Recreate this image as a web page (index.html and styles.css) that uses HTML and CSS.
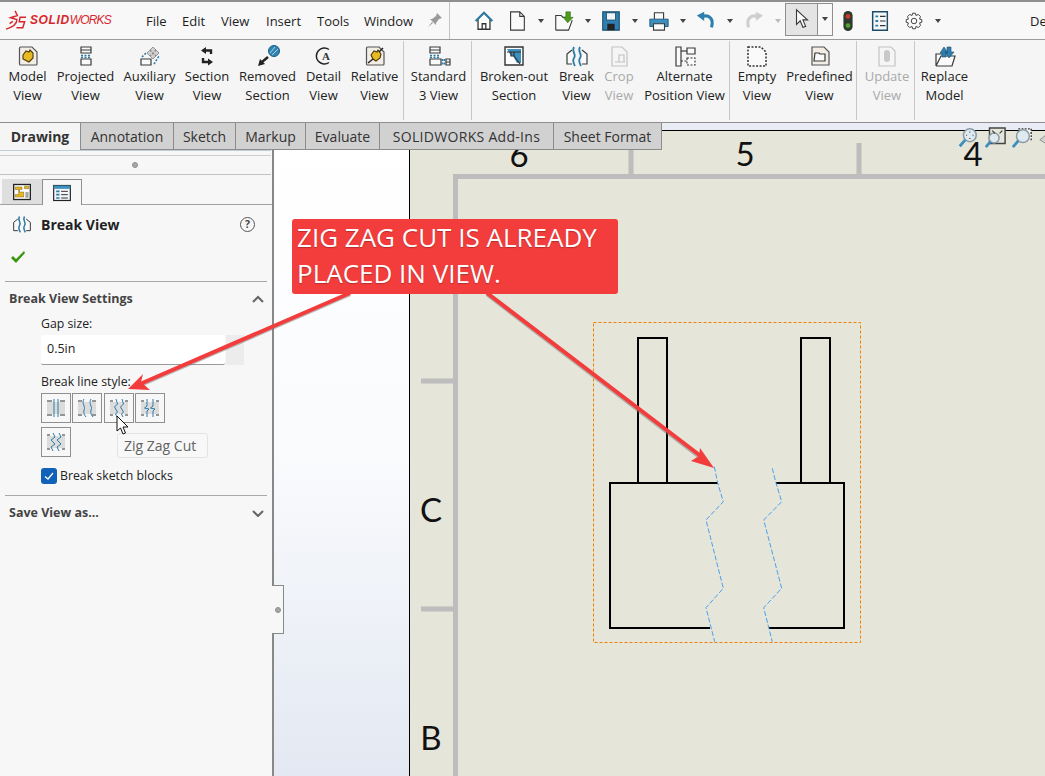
FILE: index.html
```html
<!DOCTYPE html>
<html lang="en">
<head>
<meta charset="utf-8">
<title>SOLIDWORKS Break View</title>
<link rel="stylesheet" href="styles.css">
</head>
<body>
<div class="app">
  <header class="topbar">
    <div class="logo">
      <svg class="logo-mark" viewBox="0 0 24 22"><path d="M11 1 L13.5 6 L6 8.5 L13 10.5 C13 15 8 19 1 21 M5 15 L8.5 12.5 M23 8 H16.5 L15.5 13 H21.5 L19.5 19.5 H12.5"/></svg>
      <span class="logo-text"><b>SOLID</b>WORKS</span>
    </div>
    <nav class="menu"><span>File</span><span>Edit</span><span>View</span><span>Insert</span><span>Tools</span><span>Window</span></nav>
    <svg class="pin" viewBox="0 0 16 16"><path d="M10 1 L15 6 L12 7 L9 11 L9 13 L3 7 L5 7 L9 4 Z M5 10 L1 15 L6 11 Z"/></svg>
    <div class="qa">
      <svg class="qi qi-home" viewBox="0 0 24 24"><path class="ol" d="M3 12 L12 3 L21 12 M5.5 10 V21 H18.5 V10 M10 21 V15 H14 V21"/><path class="blue" d="M3 12 L12 3 L21 12"/></svg>
      <svg class="qi qi-new" viewBox="0 0 24 24"><path class="page" d="M5 2 H15 L20 7 V22 H5 Z M15 2 V7 H20"/></svg>
      <i class="drop"></i>
      <svg class="qi qi-open" viewBox="0 0 24 24"><path class="page" d="M3 22 V6 H9 L11 8 H15 M3 22 H17 L21 11"/><path class="greenfill" d="M14 2 H19 V8 H22 L16 14 L11 8 H14 Z"/></svg>
      <i class="drop"></i>
      <svg class="qi qi-save" viewBox="0 0 24 24"><path class="savebody" d="M3 2 H21 V22 H3 Z"/><path class="savelabel" d="M7 3 H17 V11 H7 Z"/><path class="savedisk" d="M8 15 H16 V22 H8 Z"/></svg>
      <i class="drop"></i>
      <svg class="qi qi-print" viewBox="0 0 24 24"><path class="page" d="M7 10 V3 H17 V10"/><path class="printbody" d="M2 10 H22 V18 H2 Z"/><path class="page" d="M6 15 H18 V22 H6 Z"/></svg>
      <i class="drop"></i>
      <svg class="qi qi-undo" viewBox="0 0 24 24"><path class="undo" d="M8 7 C15 5 21 9 18 19"/><path class="undohead" d="M2 6 L10 2 L10 12 Z"/></svg>
      <i class="drop"></i>
      <svg class="qi qi-redo" viewBox="0 0 24 24"><path class="redo" d="M16 7 C9 5 3 9 6 19"/><path class="redohead" d="M22 6 L14 2 L14 12 Z"/></svg>
      <i class="drop dim"></i>
      <div class="selectbtn">
        <span class="selectmain"><svg class="qi" viewBox="0 0 24 24"><path class="page" d="M6 2 L6 18 L10 14 L13 21 L16 20 L13 13 L18 13 Z"/></svg></span>
        <span class="selectdrop"><i class="drop"></i></span>
      </div>
      <svg class="qi qi-light" viewBox="0 0 24 24"><rect class="lightbody" x="7" y="1" width="10" height="22" rx="5"/><circle class="red" cx="12" cy="7" r="2.6"/><circle class="grn" cx="12" cy="17" r="2.6"/></svg>
      <svg class="qi qi-list" viewBox="0 0 24 24"><path class="listbox" d="M4 2 H20 V22 H4 Z"/><path class="listline" d="M7 7 H10 M7 12 H10 M7 17 H10"/><path class="listdark" d="M12 7 H18 M12 12 H18 M12 17 H18"/></svg>
      <svg class="qi qi-gear" viewBox="-2 -2 28 28"><path class="page" d="M10.3 2.1 L13.7 2.1 L14.4 4.9 L17.7 3.8 L20.2 6.3 L19.1 9.6 L21.9 10.3 L21.9 13.7 L19.1 14.4 L20.2 17.7 L17.7 20.2 L14.4 19.1 L13.7 21.9 L10.3 21.9 L9.6 19.1 L6.3 20.2 L3.8 17.7 L4.9 14.4 L2.1 13.7 L2.1 10.3 L4.9 9.6 L3.8 6.3 L6.3 3.8 L9.6 4.9 Z"/><circle class="page" cx="12" cy="12" r="3.5"/></svg>
      <i class="drop"></i>
    </div>
    <span class="doc">De</span>
  </header>

  <section class="ribbon">
    <div class="rgroup first">
      <div class="ritem w49"><svg viewBox="0 0 24 24"><path class="softpage" d="M4.5 3 H16 L21 8 V20 Q21 21 20 21 H4.5 Q3.5 21 3.5 20 V4 Q3.5 3 4.5 3 Z"/><path class="blob" d="M7 11 L10 7 L13 8 L14 6 L17 9 L17 14 L13 18 L9 16 L7 15 Z"/></svg><span>Model<br>View</span></div>
      <div class="ritem w67"><svg viewBox="0 0 24 24"><path class="page" d="M7 3 H17 V9 H7 Z M7 6 H17 M7 15 H17 V21 H7 Z"/><path class="bluedash" d="M7 11.5 H17 M7 13.5 H17" /></svg><span>Projected<br>View</span></div>
      <div class="ritem w61"><svg viewBox="0 0 24 24"><path class="page" d="M3 15 H13 V21 H3 Z"/><path class="gray-diamond" d="M9 9 L15 3 L21 9 L15 15 Z"/><path class="graydash" d="M12 6 L18 12 M18 6 L12 12"/><path class="bluedash" d="M4 13 L9 8 M16 20 L21 12"/></svg><span>Auxiliary<br>View</span></div>
      <div class="ritem w54"><svg viewBox="0 0 24 24"><path class="heavy" d="M10 6.5 H16 V10 M14 18 H8 V14"/><path class="arrowfill" d="M11 3 L6 6.5 L11 10 Z M13 21.5 L18 18 L13 14.5 Z"/></svg><span>Section<br>View</span></div>
      <div class="ritem w67"><svg viewBox="0 0 24 24"><circle class="hatch" cx="18" cy="7" r="5.5"/><path class="hatchline" d="M14 9 L19 3 M16 11 L22 5"/><path class="heavy" d="M12 13 L6 18"/><path class="arrowfill" d="M2 22 L4 15 L9 20 Z"/></svg><span>Removed<br>Section</span></div>
      <div class="ritem w45"><svg viewBox="0 0 24 24"><path class="heavy thin" d="M17 5.5 A8 8 0 1 0 17 18.5"/></svg><b class="letter">A</b><span>Detail<br>View</span></div>
      <div class="ritem w57"><svg viewBox="0 0 24 24"><path class="softpage" d="M4.5 3 H16 L21 8 V20 Q21 21 20 21 H4.5 Q3.5 21 3.5 20 V4 Q3.5 3 4.5 3 Z"/><path class="blob" d="M8 11 L11 7 L14 8 L15 6 L18 10 L17 14 L13 17 L10 15 Z"/><path class="heavy thin" d="M5 19 L10 15 M16 8 L20 4"/></svg><span>Relative<br>View</span></div>
    </div>
    <div class="rgroup g2">
      <div class="ritem w65"><svg viewBox="0 0 24 24"><path class="page" d="M3 3 H13 V9 H3 Z M3 6 H13 M3 15 H14 V21 H3 Z M19 15 H23 V21 H19 Z M19 18 H23"/><path class="bluedash" d="M3 11.5 H13 M3 13.5 H13 M15.5 15 V21 M17.5 15 V21"/></svg><span>Standard<br>3 View</span></div>
    </div>
    <div class="rgroup g3">
      <div class="ritem w80"><svg viewBox="0 0 24 24"><path class="broken" d="M3 3 H21 V21 H3 Z"/><path class="brokenfill" d="M5 5 H19 V19 H15 L11 12 L9 12 Z"/><path class="listdark" d="M5 8 H19 M9 8 V12 H12 V8 M12 12 L18 20"/></svg><span>Broken-out<br>Section</span></div>
      <div class="ritem w45"><svg viewBox="0 0 24 24"><path class="page" d="M7 6 L2 10 V20 H7 M17 6 L22 10 V20 H17"/><path class="wave" d="M9 3 C6 8 12 10 9 14 C7 17 9 20 10 22 M15 3 C12 8 18 10 15 14 C13 17 15 20 16 22"/></svg><span>Break<br>View</span></div>
      <div class="ritem w40 off"><svg viewBox="0 0 24 24"><path class="pageoff" d="M5 3 H15 L20 8 V22 H5 Z"/><path class="pageoff" d="M8 18 H18 M12 18 V11 H17 V18"/></svg><span>Crop<br>View</span></div>
      <div class="ritem w91"><svg viewBox="0 0 24 24"><path class="page" d="M3 3 H8 V22 H3 Z M14 4 H22 V10 H14 Z"/><path class="page" d="M8 7 H14"/><path class="dashk" d="M8 17 H14 M14 14 H22 V21 H14 Z"/></svg><span>Alternate<br>Position View</span></div>
    </div>
    <div class="rgroup g4">
      <div class="ritem w50"><svg viewBox="0 0 24 24"><path class="dashk strong" d="M3 3 H16 L21 8 V22 H3 Z"/></svg><span>Empty<br>View</span></div>
      <div class="ritem w75"><svg viewBox="0 0 24 24"><path class="softpage" d="M4 3 H16 L21 8 V21 H4 Z"/><path class="page" d="M7 9 H11 L12 10 H17 V17 H6 Z"/></svg><span>Predefined<br>View</span></div>
    </div>
    <div class="rgroup g5">
      <div class="ritem w56 off"><svg viewBox="0 0 24 24"><path class="pageoff" d="M4 3 H16 L20 7 V22 H4 Z"/><rect class="offfill" x="9" y="6" width="6" height="12" rx="3"/></svg><span>Update<br>View</span></div>
    </div>
    <div class="rgroup g6">
      <div class="ritem w53"><svg viewBox="0 0 24 24"><path class="foldertan" d="M3 12 H13 V22 H3 Z"/><path class="page" d="M3 22 V10 H9 M3 22 H19 L22 12 H8 L3 22"/><path class="upblue" d="M7 9 L11 3 L15 9 H13 V13 H9 V9 Z M14 3 H18 V8 H21 L16 14 L12 8 H14 Z"/></svg><span>Replace<br>Model</span></div>
    </div>
  </section>

  <main class="workspace">
    <aside class="panel">
      <div class="panel-grip"><i class="dot"></i></div>
      <div class="ptabs">
        <span class="ptab"><svg viewBox="0 0 24 24"><rect class="fmbox" x="2" y="3" width="20" height="18"/><path class="fmfill" d="M4 6 H12 V9 H9 V12 H14 V18 H4 V15 H8 V9 H4 Z M15 5 H20 V8 H15 Z"/><path class="fmgray" d="M16 12 H20 V19 H16 Z"/></svg></span>
        <span class="ptab active"><svg viewBox="0 0 24 24"><rect class="pmbox" x="2" y="3" width="20" height="18"/><path class="pmhead" d="M2 3 H22 V7 H2 Z"/><path class="listline" d="M5 10 H9 M5 14 H9 M5 18 H9"/><path class="listdark" d="M11 10 H19 M11 14 H19 M11 18 H19"/></svg></span>
      </div>
      <div class="ptitle">
        <svg viewBox="0 0 24 24"><path class="page" d="M7 6 L2 10 V20 H7 M17 6 L22 10 V20 H17"/><path class="wave" d="M9 3 C6 8 12 10 9 14 C7 17 9 20 10 22 M15 3 C12 8 18 10 15 14 C13 17 15 20 16 22"/></svg>
        <h1>Break View</h1>
        <span class="help">?</span>
      </div>
      <div class="pok"><svg viewBox="0 0 16 14"><path d="M1 8 L3 6 L6 9 L14 1 L15 3 L6 13 Z"/></svg></div>
      <section class="pgroup settings">
        <div class="phead"><h2>Break View Settings</h2><svg class="chev" viewBox="0 0 12 8"><path d="M1 7 L6 2 L11 7"/></svg></div>
        <div class="pbody">
          <label class="flabel">Gap size:</label>
          <div class="inputrow"><span class="input">0.5in</span><span class="spin"></span></div>
          <label class="flabel style-label">Break line style:</label>
          <div class="stylegrid">
            <button class="sbtn"><svg viewBox="0 0 24 24"><rect class="sgrad" x="3" y="6" width="18" height="12"/><path class="sblack" d="M3 5 H8 M16 5 H21 M3 19 H8 M16 19 H21"/><path class="sblue" d="M10 3 V21 M14 3 V21"/></svg></button>
            <button class="sbtn"><svg viewBox="0 0 24 24"><rect class="sgrad" x="3" y="6" width="18" height="12"/><path class="sblack" d="M3 5 H7 M17 5 H21 M3 19 H7 M17 19 H21"/><path class="sblue" d="M9 3 C6 8 11 10 9 14 C8 17 10 20 11 21 M16 3 C13 8 18 10 16 14 C15 17 17 20 18 21"/></svg></button>
            <button class="sbtn"><svg viewBox="0 0 24 24"><rect class="sgrad" x="3" y="6" width="18" height="12"/><path class="sblack" d="M3 5 H6 M18 5 H21 M3 19 H6 M18 19 H21"/><path class="sblue" d="M9 3 L10.5 8 L7.5 11 L10.5 16 L8.5 18 L10 21 M15 3 L16.5 8 L13.5 11 L16.5 16 L14.5 18 L16 21"/></svg></button>
            <button class="sbtn"><svg viewBox="0 0 24 24"><rect class="sgrad" x="3" y="6" width="18" height="12"/><path class="sblack" d="M3 5 H6 M18 5 H21 M3 19 H6 M18 19 H21"/><path class="sblue" d="M9 3 V10 L6.5 12 L11 13 L9 15 V21 M15 3 V10 L12.5 12 L17 13 L15 15 V21"/></svg></button>
            <button class="sbtn"><svg viewBox="0 0 24 24"><rect class="sgrad" x="3" y="6" width="18" height="12"/><path class="sblack" d="M3 5 H6 M18 5 H21 M3 19 H6 M18 19 H21"/><path class="sblue" d="M9 3 L11 7 L7 10 L11 14 L7 17 L9 21 M15 3 L17 7 L13 10 L17 14 L13 17 L15 21"/></svg></button>
          </div>
          <label class="check"><span class="box"><svg viewBox="0 0 16 16"><path d="M4 8.5 L7 11 L12 5"/></svg></span>Break sketch blocks</label>
        </div>
      </section>
      <section class="pgroup saveas">
        <div class="phead"><h2>Save View as...</h2><svg class="chev" viewBox="0 0 12 8"><path d="M1 2 L6 7 L11 2"/></svg></div>
      </section>
    </aside>
    <div class="panel-tab"><i class="dot"></i></div>
    <div class="gutter"></div>
    <div class="sheet">
      <svg class="drawing" viewBox="0 0 636 646">
        <path class="frame" d="M46.5 647 V46.5 H637 M222 13 V45 M450 13 V45 M12 251 H45 M12 479 H45"/>
        <text class="zone" x="110" y="37" text-anchor="middle">6</text>
        <text class="zone" x="336" y="36" text-anchor="middle">5</text>
        <text class="zone" x="564" y="36" text-anchor="middle">4</text>
        <text class="zone" x="22" y="392" text-anchor="middle">C</text>
        <text class="zone" x="22" y="620" text-anchor="middle">B</text>
        <rect class="selbox" x="184.5" y="192.5" width="267" height="320"/>
        <path class="part" d="M229 354 V208 H258 V353 M392 353 V208 H421 V353 M309 353 H201 V498 H301 M360 498 H435 V353 H367"/>
        <path class="cut" d="M305.3 336.7 L308.7 353 L314.3 371.7 L297 390 L314.3 458.3 L297 477.7 L305.7 511.7"/>
        <path class="cut" d="M363.3 338.3 L367 353 L372.7 371.7 L354.7 390 L372.7 458.3 L354.7 477.7 L363.3 511.7"/>
      </svg>
      <div class="viewtools">
        <svg viewBox="0 0 24 24"><circle class="lens" cx="14" cy="9" r="7"/><path class="handle" d="M9 14 L3 21"/><path class="listdark" d="M14 5 V6 M14 12 V13 M10 9 H11 M17 9 H18"/></svg>
        <svg viewBox="0 0 24 24"><path class="zbox" d="M6 1 H23 V18 H6 Z"/><circle class="lens" cx="11" cy="12" r="5.5"/><path class="handle" d="M7 16 L2 22"/><path class="listdark" d="M9 4 L12 7 M20 4 L17 7"/></svg>
        <svg viewBox="0 0 24 24"><path class="dashk strong" d="M8 2 H22 V15"/><circle class="lens" cx="13" cy="10" r="7"/><path class="handle" d="M8 15 L2 22"/></svg>
        <svg class="eraser" viewBox="0 0 24 24"><path class="erase" d="M2 14 L12 6 L22 8 V14 L12 20 Z"/></svg>
      </div>
    </div>
    <nav class="tabs">
      <span class="tab current">Drawing</span>
      <span class="tab t93">Annotation</span>
      <span class="tab t62">Sketch</span>
      <span class="tab t70">Markup</span>
      <span class="tab t74">Evaluate</span>
      <span class="tab t174">SOLIDWORKS Add-Ins</span>
      <span class="tab t109">Sheet Format</span>
    </nav>
    <div class="tooltip">Zig Zag Cut</div>
    <svg class="cursor" viewBox="0 0 14 20"><path d="M1 1 V16 L4.5 13 L7 19 L9.5 18 L7 12 L12 12 Z"/></svg>
    <svg class="annot" viewBox="0 0 1045 654">
      <path class="ashadow" d="M350 171 L140 262 M487 171 L700 334"/>
      <path class="aline" d="M350 170 L140 261 M487 170 L702 334"/>
      <path class="ahead" d="M128 266 L143 251 L141 259 L150 267 Z M714 345 L691 338 L699 333 L700 325 Z"/>
    </svg>
    <div class="callout">ZIG ZAG CUT IS ALREADY<br>PLACED IN VIEW.</div>
  </main>
</div>
</body>
</html>
```
FILE: styles.css
```css
* { box-sizing: border-box; }
html, body { margin: 0; padding: 0; }
body { width: 1045px; height: 776px; overflow: hidden; background: #f5f5f5; font-family: "Open Sans", "Liberation Sans", sans-serif; color: #222; }
.app { display: flex; flex-direction: column; width: 1045px; height: 776px; }
svg { display: block; fill: none; }

/* top bar */
.topbar { display: flex; align-items: center; height: 40px; flex: none; background: #f8f8f8; border-top: 2px solid #8f8f8f; border-bottom: 1px solid #9a9a9a; }
.logo { display: flex; align-items: center; width: 146px; padding-left: 5px; flex: none; margin-top: -2px; }
.logo-mark { width: 22px; height: 20px; stroke: #d8262c; stroke-width: 1.6; }
.logo-text { font: italic 12px "Liberation Sans", sans-serif; color: #d8262c; margin-left: 3px; letter-spacing: -.8px; }
.logo-text b { font-weight: 700; letter-spacing: .6px; }
.menu { display: flex; font-size: 13px; color: #1d1d1d; width: 283px; flex: none; }
.menu span:nth-child(1) { width: 36px; }
.menu span:nth-child(2) { width: 39px; }
.menu span:nth-child(3) { width: 45px; }
.menu span:nth-child(4) { width: 51px; }
.menu span:nth-child(5) { width: 47px; }
.pin { width: 16px; height: 16px; fill: #9a9a9a; margin-left: -2px; flex: none; margin-right: 6px; margin-top: -2px; }
.qa { display: flex; align-items: center; height: 37px; width: 580px; border-left: 1px solid #c4c4c4; padding-left: 23px; flex: none; }
.qi { width: 22px; height: 22px; flex: none; }
.drop { display: block; width: 0; height: 0; flex: none; border-left: 3px solid transparent; border-right: 3px solid transparent; border-top: 4px solid #444; margin: 0 9.5px 0 10px; }
.drop.dim { border-top-color: #bbb; }
.qi-new { margin-left: 11px; }
.qi-open { margin-left: -1px; }
.selectbtn { display: flex; height: 33px; margin: -3px 0 0 -5px; border: 1px solid #8f8f8f; flex: none; }
.selectmain { display: flex; align-items: center; justify-content: center; width: 32px; background: #e4e4e4; border-right: 1px solid #8f8f8f; }
.selectdrop { display: flex; align-items: center; width: 14px; }
.selectdrop .drop { margin: 0 4px; }
.qi-light { margin-left: 4px; }
.qi-list { margin-left: 10px; }
.qi-gear { margin-left: 12px; }
.doc { font-size: 13px; margin-left: 1px; color: #222; }
.ol { stroke: #333; stroke-width: 1.4; fill: #fff; }
.blue { stroke: #2c7ba6; stroke-width: 2.2; }
.page { stroke: #3a3a3a; stroke-width: 1.2; fill: #fafafa; }
.softpage { stroke: #555; stroke-width: 1.2; fill: #f2eee6; }
.greenfill { fill: #4e9a1f; stroke: #2f6c10; stroke-width: .6; }
.savebody { fill: #2f80b0; stroke: #174c6c; stroke-width: 1.2; }
.savelabel { fill: #f0f4f6; stroke: #174c6c; }
.savedisk { fill: #222; }
.printbody { fill: #3d8fbd; stroke: #1f5c80; stroke-width: 1; }
.undo { stroke: #2e7fae; stroke-width: 3.4; }
.undohead { fill: #2e7fae; }
.redo { stroke: #cfcfcf; stroke-width: 3.4; }
.redohead { fill: #cfcfcf; }
.lightbody { fill: #2f3a2f; }
.red { fill: #cf3a2a; }
.grn { fill: #4da32b; }
.listbox { fill: #f4f7f9; stroke: #1f4a66; stroke-width: 1.6; }
.listline { stroke: #2c7ba6; stroke-width: 2; }
.listdark { stroke: #333; stroke-width: 1.2; }

/* ribbon */
.ribbon { display: flex; height: 82px; flex: none; background: #f5f5f5; }
.rgroup { display: flex; height: 79px; margin-top: 1px; border-right: 1px solid #c8c8c8; flex: none; padding-top: 3px; }
.rgroup.first { width: 404px; padding-left: 3px; }
.rgroup.g2 { width: 68px; padding-left: 2px; }
.rgroup.g3 { width: 258px; padding-left: 2px; }
.rgroup.g4 { width: 127px; padding-left: 2px; }
.rgroup.g5 { width: 58px; padding-left: 2px; }
.rgroup.g6 { border-right: 0; padding-left: 3px; }
.ritem { position: relative; display: flex; flex-direction: column; align-items: center; font-size: 13px; line-height: 19px; text-align: center; flex: none; white-space: nowrap; color: #222; }
.ritem > svg { width: 24px; height: 24px; flex: none; margin-bottom: -1px; }
.ritem.off { color: #a9a9a9; }
.w40 { width: 40px; } .w45 { width: 45px; } .w49 { width: 49px; } .w50 { width: 50px; } .w53 { width: 53px; } .w54 { width: 54px; } .w56 { width: 56px; } .w57 { width: 57px; } .w61 { width: 61px; } .w65 { width: 65px; } .w67 { width: 67px; } .w75 { width: 75px; } .w80 { width: 80px; } .w91 { width: 91px; }
.blob { fill: #e8b923; stroke: #4a3a08; stroke-width: 1.1; }
.bluedash { stroke: #2c7ba6; stroke-width: 1.6; stroke-dasharray: 2 1.5; }
.graydash { stroke: #888; stroke-width: 1.4; stroke-dasharray: 2 1.5; }
.gray-diamond { fill: #d0d0d0; stroke: #999; stroke-width: 1; }
.heavy { stroke: #222; stroke-width: 2.4; }
.heavy.thin { stroke-width: 1.5; }
.arrowfill { fill: #222; }
.hatch { fill: #2f86b5; stroke: #1d5c80; stroke-width: 1; }
.hatchline { stroke: #a8cde0; stroke-width: 1; }
.letter { position: absolute; top: 6px; left: 21px; font: 700 11px "Liberation Serif", serif; color: #333; }
.broken { fill: #fff; stroke: #333; stroke-width: 1.4; }
.brokenfill { fill: #3d8fbd; }
.wave { stroke: #2c7ba6; stroke-width: 1.8; }
.pageoff { stroke: #c4c4c4; stroke-width: 1.2; fill: #f5f5f5; }
.offfill { fill: #c9c9c9; }
.dashk { stroke: #333; stroke-width: 1.1; stroke-dasharray: 2 1.5; fill: #fafafa; }
.dashk.strong { stroke-width: 1.5; }
.foldertan { fill: #dccb9c; }
.upblue { fill: #2e7fae; stroke: #1a4f70; stroke-width: .6; }

/* workspace */
.workspace { position: relative; display: flex; flex: 1; min-height: 0; border-top: 1px solid #8f8f8f; }
.tabs { position: absolute; left: 0; top: 0; display: flex; height: 27px; font-size: 14px; }
.tab { display: flex; align-items: center; justify-content: center; height: 27px; background: #d1d1d1; border-right: 1px solid #8c8c8c; border-bottom: 1px solid #8c8c8c; color: #333; }
.tab.current { width: 81px; background: #f5f5f5; font-weight: 700; color: #333; border-bottom: 0; }
.t93 { width: 93px; } .t62 { width: 62px; } .t70 { width: 70px; } .t74 { width: 74px; } .t174 { width: 174px; letter-spacing: .3px; } .t109 { width: 108px; }

/* panel */
.panel { width: 274px; flex: none; background: #f7f7f7; border-right: 2px solid #888; padding-top: 27px; }
.panel-grip { height: 25px; margin-right: 1px; border-top: 1px solid #bcd0d6; box-shadow: inset 0 4px 0 #f7f7f7, inset 0 5px 0 #cfcfcf; border-bottom: 1px solid #c2c2c2; display: flex; align-items: center; justify-content: center; padding-top: 5px; padding-right: 2px; }
.dot { display: block; width: 6px; height: 6px; border-radius: 50%; background: #a8a8a8; border: 1px solid #8e8e8e; }
.ptabs { display: flex; height: 26px; margin-top: 4px; padding-left: 2px; border-bottom: 1px solid #a2a2a2; }
.ptab { display: flex; align-items: center; justify-content: center; width: 40px; height: 25px; background: #dedede; }
.ptab.active { height: 26px; background: #f7f7f7; border: 1px solid #8f8f8f; border-bottom: 0; }
.ptab svg { width: 20px; height: 20px; }
.fmbox { fill: #fff; stroke: #222; stroke-width: 1.6; }
.fmfill { fill: #e9b81c; stroke: #5c4706; stroke-width: .5; }
.fmgray { fill: #a8a8a8; }
.pmbox { fill: #f3f6f8; stroke: #222; stroke-width: 1.4; }
.pmhead { fill: #3d8fbd; }
.ptitle { display: flex; align-items: center; height: 42px; padding: 0 0 4px 12px; }
.ptitle svg { width: 20px; height: 20px; flex: none; }
.ptitle h1 { margin: 0 0 0 9px; font-size: 14px; font-weight: 700; color: #222; width: 198px; }
.help { display: block; width: 15px; height: 15px; margin-left: 1px; border: 1.5px solid #555; border-radius: 50%; font-size: 10.5px; font-weight: 700; line-height: 12px; text-align: center; color: #444; }
.pok { height: 34px; padding: 3px 0 0 10px; }
.pok svg { width: 16px; height: 14px; fill: #3b960f; }
.pgroup { margin: 0 5px; border-top: 1px solid #a9a9a9; }
.phead { display: flex; align-items: center; justify-content: space-between; height: 33px; padding: 0 3px 0 4px; }
.phead h2 { margin: 0; font-size: 12.5px; font-weight: 700; color: #444; }
.chev { width: 12px; height: 8px; stroke: #666; stroke-width: 2; }
.pbody { padding-left: 36px; height: 180px; }
.flabel { display: block; font-size: 12.3px; line-height: 18px; color: #222; }
.inputrow { display: flex; height: 30px; margin-top: 2px; }
.input { display: block; width: 184px; padding: 5px 6px; font-size: 12.5px; line-height: 18px; background: #fff; border-bottom: 1px solid #9a9a9a; border-radius: 2px; color: #222; }
.spin { display: block; width: 18px; margin-left: 1px; background: #ececec; }
.style-label { margin-top: 8px; }
.stylegrid { display: grid; grid-template-columns: repeat(4, 30px); gap: 4px 1.4px; margin-top: 2px; }
.sbtn { display: flex; align-items: center; justify-content: center; width: 30px; height: 30px; padding: 0; background: #f7f7f7; border: 1px solid #8f8f8f; }
.sbtn svg { width: 24px; height: 24px; }
.sgrad { fill: #dcdcdc; }
.sblack { stroke: #333; stroke-width: 1; }
.sblue { stroke: #2c7ba6; stroke-width: 1; }
.check { display: flex; align-items: center; margin-top: 10px; font-size: 12.3px; color: #222; }
.box { display: block; width: 16px; height: 16px; margin-right: 3px; background: #0f62b8; border-radius: 3px; }
.box svg { width: 16px; height: 16px; stroke: #fff; stroke-width: 1.3; }
.saveas { border-top: 1px solid #a9a9a9; }
.panel-tab { position: absolute; left: 272px; top: 462px; display: flex; align-items: center; justify-content: center; width: 12px; height: 49px; background: #f7f7f7; border: 1px solid #888; border-left: 0; }

/* canvas */
.gutter { width: 135px; flex: none; background: linear-gradient(180deg, #ffffff 0%, #fafbfd 50%, #e3e8f2 100%); }
.sheet { position: relative; flex: 1; background: linear-gradient(180deg, #e9ebf5 0, #e9ebf5 7px, #000 7px, #000 8px, #e5e5da 8px); border-left: 1px solid #000; }
.drawing { position: absolute; left: -1px; top: 7px; width: 636px; height: 646px; }
.frame { stroke: #bdbdbd; stroke-width: 5; stroke-linejoin: miter; }
.zone { font: 400 33px "Lato", "Liberation Sans", sans-serif; fill: #111; }
.selbox { stroke: #f08000; stroke-width: 1; stroke-dasharray: 3 2; }
.part { stroke: #000; stroke-width: 2; }
.cut { stroke: #4aa0ee; stroke-width: 1; stroke-dasharray: 5 2; }
.viewtools { position: absolute; left: 547px; top: 4px; display: flex; gap: 5px; }
.viewtools svg { width: 22px; height: 22px; flex: none; }
.lens { fill: #dfeaf0; stroke: #8a9ba4; stroke-width: 1.6; }
.handle { stroke: #3c8fbd; stroke-width: 3; }
.zbox { stroke: #444; stroke-width: 1.6; fill: #e5e5da; }
.erase { fill: #d4d4d4; stroke: #8a8a8a; }

/* overlays */
.tooltip { position: absolute; left: 117px; top: 310px; width: 91px; height: 25px; padding-left: 6px; font-size: 14px; line-height: 24px; color: #636363; background: #f8f8f8; border: 1px solid #e4e4e4; border-radius: 3px; }
.cursor { position: absolute; left: 116px; top: 292px; width: 14px; height: 20px; fill: #fff; stroke: #111; stroke-width: 1; }
.annot { position: absolute; left: 0; top: 0; width: 1045px; height: 654px; pointer-events: none; }
.ashadow { stroke: #777; stroke-width: 4.5; opacity: .5; }
.aline { stroke: #f33c3c; stroke-width: 4; }
.ahead { fill: #f33c3c; }
.callout { position: absolute; left: 292px; top: 96px; width: 326px; height: 75px; padding: 0 5px; font-size: 26px; line-height: 36px; color: #fff; background: #f33c3c; border-radius: 3px; text-shadow: 0 1px 1px rgba(0,0,0,.25); white-space: nowrap; }
```
